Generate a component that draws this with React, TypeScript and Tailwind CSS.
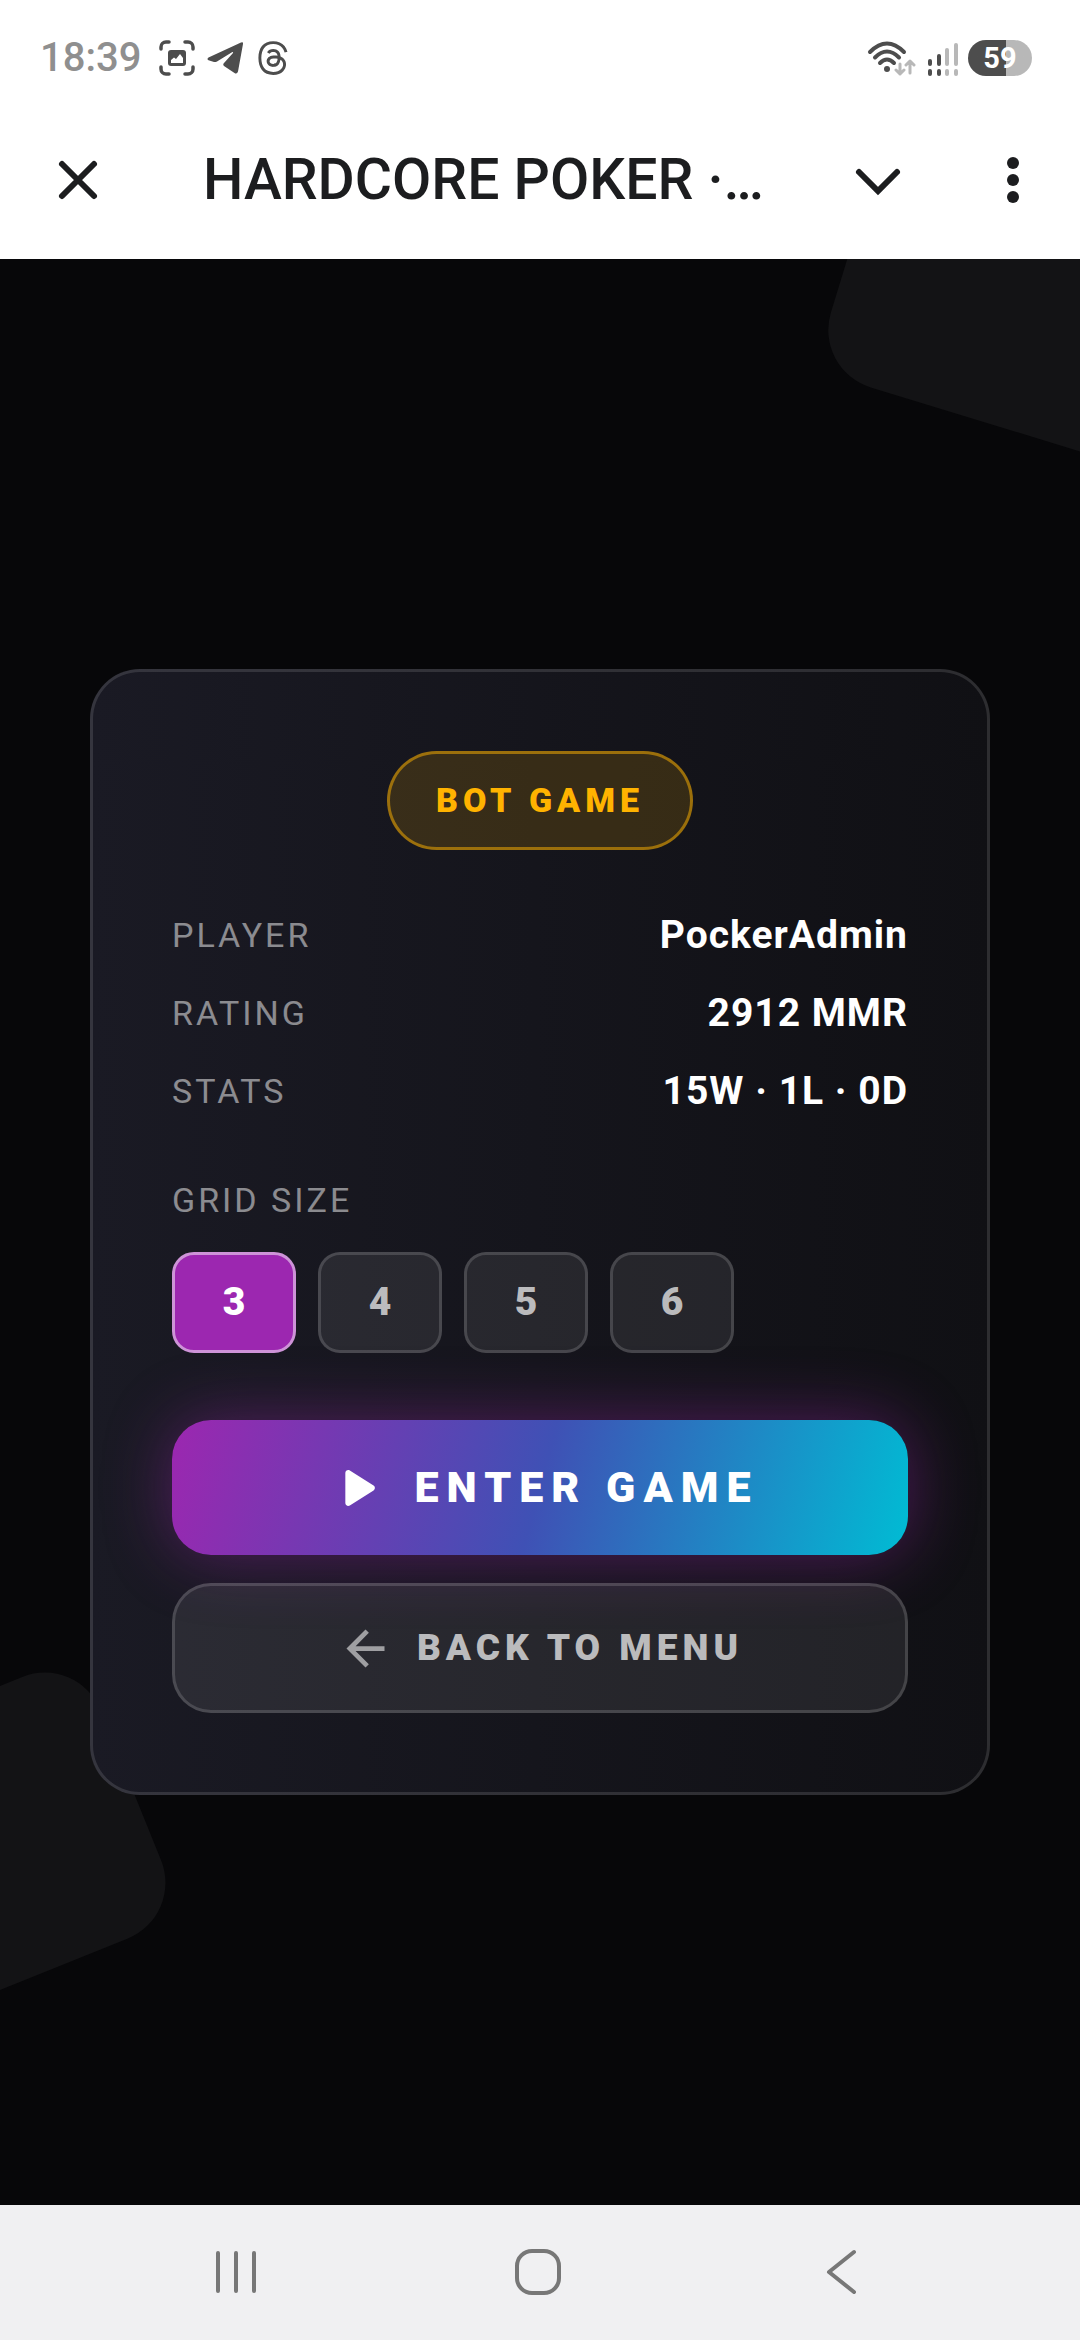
import { useState } from "react";
import { MdArrowBack } from "react-icons/md";
import { FaThreads } from "react-icons/fa6";

const stats = [
  { label: "PLAYER", value: "PockerAdmin" },
  { label: "RATING", value: "2912 MMR" },
  { label: "STATS", value: "15W · 1L · 0D" },
];

const gridSizes = [3, 4, 5, 6];

function StatusBar() {
  return (
    <div className="flex h-[116px] items-center justify-between pl-10 pr-12">
      <div className="flex items-center text-[#4d4d4d]">
        <span className="text-[40px] font-medium leading-10 text-[#8f8f8f]">18:39</span>
        <svg width="36" height="36" viewBox="0 0 36 36" fill="none" className="ml-[18px]">
          <path
            d="M2 9V7a5 5 0 0 1 5-5h3M26 2h3a5 5 0 0 1 5 5v2M34 27v2a5 5 0 0 1-5 5h-3M10 34H7a5 5 0 0 1-5-5v-2"
            stroke="currentColor"
            strokeWidth="3.5"
            strokeLinecap="round"
          />
          <rect x="9" y="10" width="18" height="16" rx="3" fill="currentColor" />
          <path d="M12 23v-3l3-2.500 2 1.500 4-5 3 4v5z" fill="#fff" />
        </svg>
        <svg width="36" height="36" viewBox="0 0 36 36" className="ml-3">
          <path
            d="M34 2.500Q36.500 1.500 36 4L31 31.500Q30 34.500 27.500 33L17 26Q15.500 24.500 17 23L26 13Q26.500 11.500 25 12.300L10 21.500Q8.500 22.300 7 22L1.500 20.200Q-.5 19 1.500 17.500Z"
            fill="currentColor"
          />
        </svg>
        <FaThreads size={36} className="ml-3" />
      </div>

      <div className="flex items-center">
        <svg width="52" height="36" viewBox="0 0 52 36" fill="none" strokeLinecap="round" strokeLinejoin="round">
          <g stroke="#4d4d4d" strokeWidth="4">
            <path d="M4 12Q21-5 38 12" />
            <path d="M9 17.500Q21 5.500 33 17.500" />
            <path d="M14 23Q21 16 28 23" />
          </g>
          <circle cx="21" cy="29" r="3" fill="#4d4d4d" />
          <path d="M34 24v10M30 30l4 4 4-4M44 33V21M40 25l4-4 4 4" stroke="#b8b8b8" strokeWidth="3" />
        </svg>
        <svg width="32" height="36" viewBox="0 0 32 36" className="ml-2.5">
          <g fill="#4d4d4d">
            <rect x="0" y="19" width="4" height="7" rx="2" />
            <rect x="9" y="14" width="4" height="12" rx="2" />
            <rect x="0" y="29" width="4" height="7" rx="2" />
            <rect x="9" y="29" width="4" height="7" rx="2" />
          </g>
          <g fill="#b8b8b8">
            <rect x="17" y="8" width="4" height="18" rx="2" />
            <rect x="26" y="3" width="4" height="23" rx="2" />
            <rect x="17" y="29" width="4" height="7" rx="2" />
            <rect x="26" y="29" width="4" height="7" rx="2" />
          </g>
        </svg>
        <span className="ml-2 flex h-9 w-16 items-center justify-center rounded-full bg-linear-to-r from-[#4d4d4d] from-59% to-[#b8b8b8] to-59% text-[29px] font-bold leading-9 text-white">
          59
        </span>
      </div>
    </div>
  );
}

function AppBar() {
  return (
    <header className="flex h-[143px] items-center pb-4 pl-[54px] pr-[43px] text-[#1c1d1f]">
      <button type="button" aria-label="Close">
        <svg width="48" height="48" viewBox="0 0 48 48" stroke="currentColor" strokeWidth="6" strokeLinecap="round">
          <path d="M8 8l32 32M40 8L8 40" />
        </svg>
      </button>
      <h1 className="ml-[101px] flex-1 truncate text-[57px] font-medium leading-[68px]">HARDCORE POKER ·…</h1>
      <button type="button" aria-label="Minimize">
        <svg width="48" height="48" viewBox="0 0 48 48" fill="none" stroke="currentColor" strokeWidth="6" strokeLinecap="round">
          <path d="M5 16l19 19 19-19" />
        </svg>
      </button>
      <button type="button" aria-label="More options" className="ml-[87px]">
        <svg width="48" height="48" viewBox="0 0 48 48" fill="currentColor">
          <circle cx="24" cy="7" r="6" />
          <circle cx="24" cy="24" r="6" />
          <circle cx="24" cy="41" r="6" />
        </svg>
      </button>
    </header>
  );
}

function GameCard() {
  const [size, setSize] = useState(3);

  return (
    <section className="relative w-full rounded-[50px] border-3 border-white/12 bg-linear-to-r from-[#1a1a24] to-[#101014] bg-origin-border p-[79px]">
      <div className="flex justify-center">
        <span className="rounded-full border-3 border-[#ffb300]/50 bg-[#ffb300]/15 px-[46px] py-[26px] text-[34px] font-black leading-[41px] tracking-[5px] text-[#ffb300]">
          BOT GAME
        </span>
      </div>

      <dl className="mt-[62px] flex flex-col gap-8">
        {stats.map((s) => (
          <div key={s.label} className="flex items-center justify-between leading-[46px]">
            <dt className="text-[34px] tracking-[3px] text-white/50">{s.label}</dt>
            <dd className="text-[39px] font-bold tracking-[1px] text-white">{s.value}</dd>
          </div>
        ))}
      </dl>

      <h2 className="mt-[66px] text-[34px] leading-10 tracking-[3px] text-white/50">GRID SIZE</h2>
      <div className="mt-8 flex gap-[22px]">
        {gridSizes.map((n) => (
          <button
            key={n}
            type="button"
            aria-pressed={n === size}
            onClick={() => setSize(n)}
            className={
              n === size
                ? "h-[101px] w-[124px] rounded-[22px] border-3 border-[#ce93d8] bg-[#9c27b0] text-[39px] font-black text-white"
                : "h-[101px] w-[124px] rounded-[22px] border-3 border-white/15 bg-white/8 text-[39px] font-black text-white/70"
            }
          >
            {n}
          </button>
        ))}
      </div>

      <button
        type="button"
        className="mt-[67px] flex h-[135px] w-full items-center justify-center gap-[23px] rounded-[39px] bg-[linear-gradient(105deg,#9c27b0,#3f51b5_50%,#00bcd4)] text-[43px] font-black tracking-[8px] text-white shadow-[0_0_67px_rgba(156,39,176,0.45)]"
      >
        <svg width="70" height="70" viewBox="0 0 24 24" fill="currentColor">
          <path d="M8 6.820v10.360c0 .79.87 1.270 1.540.84l8.140-5.180c.62-.39.62-1.290 0-1.690L9.540 5.980C8.870 5.550 8 6.030 8 6.820z" />
        </svg>
        ENTER GAME
      </button>
      <button
        type="button"
        className="mt-7 flex h-[130px] w-full items-center justify-center gap-[23px] rounded-[39px] border-3 border-white/15 bg-white/8 text-[37px] font-black tracking-[5px] text-white/70"
      >
        <MdArrowBack size={57} className="text-white/55" />
        BACK TO MENU
      </button>
    </section>
  );
}

function NavBar() {
  return (
    <nav className="grid h-[135px] grid-cols-[1fr_300px_1fr] items-center bg-[#f0f0f2] pr-1 text-[#777]">
      <button type="button" aria-label="Recent apps" className="mr-32 justify-self-end">
        <svg width="48" height="48" viewBox="0 0 48 48" stroke="currentColor" strokeWidth="4" strokeLinecap="round">
          <path d="M6 4v38M24 4v38M42 4v38" />
        </svg>
      </button>
      <button type="button" aria-label="Home" className="justify-self-center">
        <svg width="48" height="48" viewBox="0 0 48 48" fill="none" stroke="currentColor" strokeWidth="4">
          <rect x="3" y="2" width="42" height="42" rx="15" />
        </svg>
      </button>
      <button type="button" aria-label="Back" className="ml-32 justify-self-start">
        <svg width="48" height="48" viewBox="0 0 48 48" fill="none" stroke="currentColor" strokeWidth="4" strokeLinecap="round" strokeLinejoin="round">
          <path d="M38 3L13 23l25 20" />
        </svg>
      </button>
    </nav>
  );
}

export default function App() {
  return (
    <div className="flex min-h-screen flex-col bg-white font-[Roboto,sans-serif]">
      <StatusBar />
      <AppBar />
      <main className="relative flex flex-1 items-center overflow-hidden bg-[#070709] px-[90px]">
        <div className="absolute -right-[363px] -top-[355px] size-[560px] rotate-17 rounded-[60px] bg-[#131315]" />
        <div className="absolute -left-[141px] bottom-[226px] size-[282px] -rotate-22 rounded-[60px] bg-[#131315]" />
        <GameCard />
      </main>
      <NavBar />
    </div>
  );
}
